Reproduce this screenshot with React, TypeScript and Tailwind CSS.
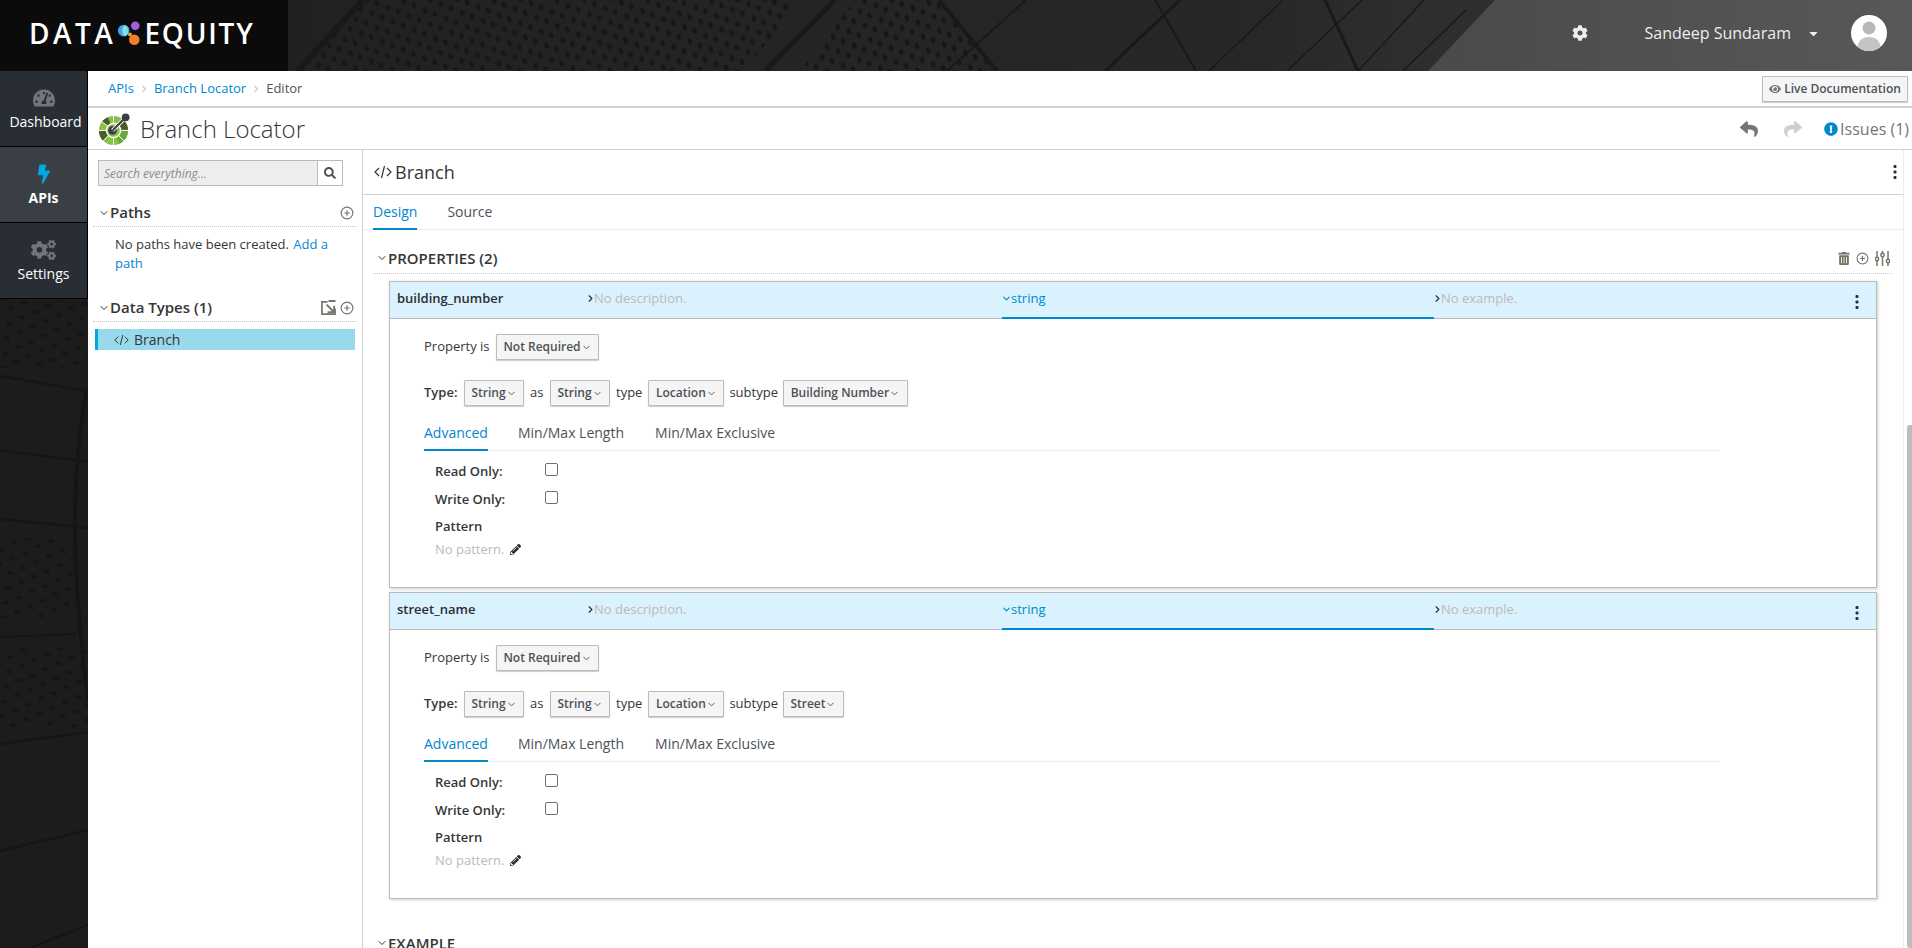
import React from "react";
import { ChevronDown, ChevronRight, CirclePlus } from "lucide-react";
import {
  FaCog, FaCogs, FaTachometerAlt, FaBolt, FaCaretDown, FaEye, FaReply, FaShare,
  FaExclamationCircle, FaTrashAlt, FaPencilAlt, FaSearch,
} from "react-icons/fa";

const CodeIcon = ({ className }: { className?: string }) => (
  <svg viewBox="0 0 18 14" className={className} fill="none" stroke="currentColor" strokeWidth="1.2">
    <path d="M5 3 1 7l4 4M13 3l4 4-4 4M10.500 1 7.500 13" />
  </svg>
);

const Kebab = () => (
  <svg viewBox="0 0 4 14" className="h-[14px] w-1" fill="#292e34">
    <rect x="0.500" y="0" width="3" height="3" rx="1" />
    <rect x="0.500" y="5.500" width="3" height="3" rx="1" />
    <rect x="0.500" y="11" width="3" height="3" rx="1" />
  </svg>
);

const ImportIcon = () => (
  <svg viewBox="0 0 16 16" className="h-[15px] w-[15px]" fill="none" stroke="#77746a" strokeWidth="1.800">
    <path d="M7 2H1v13h14V9" />
    <path d="M8 1h7.500M6 5l7 7M14 6v7H7" strokeWidth="2" />
  </svg>
);

const SlidersIcon = () => (
  <svg viewBox="0 0 15 15" className="h-[15px] w-[15px]" fill="none" stroke="#77746a" strokeWidth="1.500">
    <path d="M2 0v6M2 10v5M7.500 0v2M7.500 6v9M13 0v8M13 12v3" />
    <circle cx="2" cy="8" r="1.700" />
    <circle cx="7.500" cy="4" r="1.700" />
    <circle cx="13" cy="10" r="1.700" />
  </svg>
);

const OpenApiLogo = () => (
  <svg viewBox="0 0 34 34" className="h-[33px] w-[33px] shrink-0">
    <circle cx="16" cy="19" r="15" fill="#85c341" />
    <path d="M16 19 4 10A15 15 0 0 1 10 5.300ZM16 19 1 19A15 15 0 0 0 5 29.500ZM16 19 31 19A15 15 0 0 0 26 8Z" fill="#4d5a2e" />
    <path d="M16 19 22 32.800A15 15 0 0 0 28 28ZM16 19 31 19A15 15 0 0 1 28 28Z" fill="#69a83c" />
    <g stroke="#fff" strokeWidth="1">
      <path d="M16 19 16 4M16 19 4 10M16 19 1 19M16 19 5 30M16 19 16 34M16 19 27 30M16 19 31 19" />
    </g>
    <circle cx="16" cy="19" r="8" fill="#fff" />
    <circle cx="16" cy="19" r="6.500" fill="#85c341" />
    <circle cx="15" cy="19" r="4.500" fill="#3c3f41" />
    <path d="M15 19 28 6" stroke="#fff" strokeWidth="4" />
    <path d="M15 19 28 6" stroke="#3c3f41" strokeWidth="2.200" />
    <circle cx="28.500" cy="5.500" r="4" fill="#3c3f41" />
  </svg>
);

const HeaderTexture = () => (
  <svg className="absolute inset-0 h-[71px] w-[1912px]" viewBox="0 0 1912 71" aria-hidden="true">
    <defs>
      <linearGradient id="hg" x1="0" x2="1" y1="0" y2="0">
        <stop offset="0" stopColor="#1f1f1f" />
        <stop offset="0.65" stopColor="#272727" />
        <stop offset="0.74" stopColor="#2e2e2e" />
      </linearGradient>
      <pattern id="dots" width="17" height="15" patternUnits="userSpaceOnUse" patternTransform="rotate(-20)">
        <ellipse cx="5" cy="5" rx="2.300" ry="3.200" fill="#171717" />
        <ellipse cx="13" cy="12" rx="2.300" ry="3.200" fill="#171717" />
      </pattern>
      <linearGradient id="gg" x1="0" x2="1" y1="0" y2="0">
        <stop offset="0" stopColor="#4a4a4a" />
        <stop offset="1" stopColor="#585858" />
      </linearGradient>
    </defs>
    <rect width="1912" height="71" fill="url(#hg)" />
    <polygon points="300,71 365,0 800,0 745,71" fill="url(#dots)" />
    <polygon points="800,71 855,0 940,0 995,71" fill="url(#dots)" />
    <polygon points="1495,0 1912,0 1912,71 1428,71" fill="url(#gg)" />
    <g stroke="#191919" fill="none">
      <path d="M363 0 297 71" strokeWidth="6" />
      <path d="M835 0 765 71" strokeWidth="5" />
      <path d="M939 0 997 71" strokeWidth="4" />
      <path d="M1026 0 947 71" strokeWidth="2" />
      <path d="M1180 0 1105 71" strokeWidth="3" />
      <path d="M1155 0 1196 71" strokeWidth="2" />
      <path d="M1283 0 1209 71" strokeWidth="1.500" />
      <path d="M1325 0 1358 71" strokeWidth="3" />
      <path d="M1362 0 1287 71" strokeWidth="1.500" />
      <path d="M1424 0 1358 71" strokeWidth="1.500" />
      <path d="M1466 10 1403 71" strokeWidth="1.500" />
    </g>
  </svg>
);

const SidebarTexture = () => (
  <svg className="absolute left-0 top-0 h-[877px] w-[88px]" viewBox="0 71 88 877" aria-hidden="true">
    <defs>
      <pattern id="sdots" width="24" height="15" patternUnits="userSpaceOnUse" patternTransform="rotate(8)">
        <ellipse cx="6" cy="4" rx="3.500" ry="2" fill="#151515" />
        <ellipse cx="18" cy="11" rx="3.500" ry="2" fill="#151515" />
      </pattern>
    </defs>
    <rect x="0" y="71" width="88" height="877" fill="#1c1c1c" />
    <rect x="0" y="300" width="88" height="68" fill="url(#sdots)" />
    <rect x="0" y="538" width="74" height="80" fill="url(#sdots)" />
    <rect x="0" y="647" width="88" height="80" fill="url(#sdots)" />
    <g stroke="#151515" fill="none" strokeWidth="2.500">
      <path d="M0 376 88 391" />
      <path d="M0 450 88 462" />
      <path d="M0 519 88 528" />
      <path d="M0 637 75 634" strokeWidth="1.500" />
      <path d="M0 744 88 732" />
      <path d="M0 851 88 830" />
      <path d="M30 948 88 925" />
      <path d="M86 392C72 470 70 560 88 700" strokeWidth="3.500" />
    </g>
  </svg>
);

const Logo = () => (
  <div className="relative flex h-[71px] w-[288px] shrink-0 items-center bg-[#0b0b0b] pb-[5px] pl-[29px]">
    <span className="text-[28px] font-semibold leading-none tracking-[3.500px] text-white">DATA</span>
    <svg viewBox="0 0 26 26" className="ml-[1px] mr-[2px] h-[25px] w-[25px] shrink-0">
      <circle cx="7" cy="10" r="6" fill="#4aa3e8" />
      <ellipse cx="8.500" cy="10" rx="3" ry="5.500" fill="#7fe3e0" />
      <circle cx="19" cy="5" r="4.500" fill="#a45fd6" />
      <circle cx="13.500" cy="14" r="2" fill="#e8a23c" />
      <circle cx="18" cy="19.500" r="5.500" fill="#f57c26" />
    </svg>
    <span className="text-[28px] font-semibold leading-none tracking-[1.800px] text-white">EQUITY</span>
  </div>
);

const Header = () => (
  <header className="relative flex h-[71px] shrink-0 items-center">
    <HeaderTexture />
    <Logo />
    <div className="relative ml-auto flex h-full items-center pb-[5px] text-white">
      <FaCog className="mr-[57px] h-[16px] w-[16px] text-[#eeeeee]" />
      <span className="text-[16px] text-[#eeeeee]">Sandeep Sundaram</span>
      <FaCaretDown className="ml-[16px] mr-[31px] h-[13px] w-[13px] text-[#eeeeee]" />
      <svg viewBox="0 0 36 36" className="mr-[25px] h-[36px] w-[36px]">
        <clipPath id="av"><circle cx="18" cy="18" r="18" /></clipPath>
        <g clipPath="url(#av)">
          <rect width="36" height="36" fill="#fff" />
          <circle cx="18" cy="13" r="6.500" fill="#b8b8b8" />
          <path d="M6 36c0-10 5-14 12-14s12 4 12 14Z" fill="#c4c4c4" />
        </g>
      </svg>
    </div>
  </header>
);

const NavItem = ({ icon, label, active, bold, labelClass }: { icon: React.ReactNode; label: string; active?: boolean; bold?: boolean; labelClass?: string }) => (
  <div
    className={`flex h-[76px] w-[88px] flex-col items-center justify-center border-b border-r border-black ${active ? "bg-[#393f44]" : "bg-[#292e34]"}`}
  >
    <div className="mt-[1px] flex h-[24px] items-center">{icon}</div>
    <span className={`mt-[2px] text-[14px] leading-[20px] text-white ${bold ? "font-bold" : ""} ${labelClass ?? ""}`}>{label}</span>
  </div>
);

const Sidebar = () => (
  <aside className="relative w-[88px] shrink-0">
    <SidebarTexture />
    <div className="relative flex flex-col">
      <NavItem icon={<FaTachometerAlt className="h-[20px] w-[22px] text-[#72767b]" />} label="Dashboard" labelClass="ml-[4px]" />
      <NavItem icon={<FaBolt className="h-[20px] w-[12px] text-[#00a8e1]" />} label="APIs" active bold />
      <NavItem icon={<FaCogs className="h-[22px] w-[25px] text-[#72767b]" />} label="Settings" />
    </div>
  </aside>
);

const Crumb = () => (
  <div className="flex h-[37px] shrink-0 items-center border-b-2 border-[#d1d1d1] pl-[20px] pr-[4px] text-[13px]">
    <span className="text-[#0088ce]">APIs</span>
    <ChevronRight className="mx-[4px] h-[12px] w-[12px] text-[#8b8d8f]" strokeWidth={1.500} />
    <span className="text-[#0088ce]">Branch Locator</span>
    <ChevronRight className="mx-[4px] h-[12px] w-[12px] text-[#8b8d8f]" strokeWidth={1.500} />
    <span className="text-[#4d5258]">Editor</span>
    <button className="ml-auto flex h-[26px] w-[146px] items-center justify-center rounded-[1px] border border-[#bbbbbb] bg-[#f5f5f5] text-[12px] font-semibold text-[#4d5258] shadow-[0_1px_1px_rgba(0,0,0,0.2)]">
      <FaEye className="mr-[3px] h-[12px] w-[12px] text-[#72767b]" />
      Live Documentation
    </button>
  </div>
);

const TitleBar = () => (
  <div className="flex h-[42px] shrink-0 items-center border-b border-[#d1d1d1] pl-[10px] pr-[3px]">
    <OpenApiLogo />
    <span className="ml-[9px] text-[24px] font-light leading-none text-[#363636]">Branch Locator</span>
    <div className="ml-auto flex items-center text-[#72767b]">
      <FaReply className="h-[18px] w-[20px] text-[#72767b]" />
      <FaShare className="ml-[24px] h-[18px] w-[20px] text-[#cfcfcf]" />
      <FaExclamationCircle className="ml-[21px] h-[14px] w-[14px] text-[#0088ce]" />
      <span className="ml-[2px] text-[16px] text-[#72767b]">Issues (1)</span>
    </div>
  </div>
);

const SectionHead = ({ title, icons, className }: { title: string; icons: React.ReactNode; className?: string }) => (
  <div className={`flex h-[30px] items-center border-b border-dotted border-[#c8c8c8] ${className ?? ""}`}>
    <ChevronDown className="ml-[5px] h-[12px] w-[12px] shrink-0 text-[#363636]" strokeWidth={2} />
    <span className="text-[15px] font-semibold text-[#363636]">{title}</span>
    <div className="ml-auto mr-[3px] flex items-center gap-[4px]">{icons}</div>
  </div>
);

const PlusIcon = () => <CirclePlus className="h-[14px] w-[14px] text-[#77746a]" strokeWidth={2} />;

const LeftPanel = () => (
  <div className="w-[275px] shrink-0 border-r border-[#d1d1d1] pl-[5px] pr-[5px]">
    <div className="ml-[5px] mt-[10px] flex h-[26px] w-[245px]">
      <div className="flex flex-1 items-center border border-[#bbbbbb] bg-[#ededed] pl-[5px] pt-[1px] text-[12px] italic text-[#8b8d8f]">
        Search everything...
      </div>
      <div className="flex w-[25px] items-center justify-center border border-l-0 border-[#bbbbbb] bg-white">
        <FaSearch className="h-[12px] w-[12px] text-[#4d5258]" />
      </div>
    </div>
    <div className="mt-[11px]">
      <SectionHead title="Paths" className="pt-[2px]" icons={<PlusIcon />} />
    </div>
    <p className="mb-0 ml-[22px] mr-[20px] mt-[8px] text-[13px] leading-[19px] text-[#363636]">
      No paths have been created. <span className="ml-[1px] text-[#0088ce]">Add a path</span>
    </p>
    <div className="mt-[19px]">
      <SectionHead title="Data Types (1)" className="pt-[2px]" icons={<><ImportIcon /><PlusIcon /></>} />
    </div>
    <div className="mx-[2px] mt-[7px] flex h-[21px] items-center border-l-[3px] border-[#00a8e1] bg-[#99d9ec] pl-[16px] text-[14px] text-[#363636]">
      <CodeIcon className="h-[12px] w-[15px]" />
      <span className="ml-[5px]">Branch</span>
    </div>
  </div>
);

const Dropdown = ({ label, w }: { label: string; w: string }) => (
  <div className={`flex h-[26px] ${w} shrink-0 items-center justify-center rounded-[1px] border border-[#bbbbbb] bg-[#f5f5f5] text-[12px] font-semibold text-[#4d5258] shadow-[0_1px_1px_rgba(0,0,0,0.2)]`}>
    {label}
    <ChevronDown className="h-[11px] w-[11px] shrink-0" strokeWidth={2} />
  </div>
);

const Check = ({ label }: { label: string }) => (
  <div className="flex h-[28px] items-center">
    <span className="w-[110px] pt-[2px] text-[13px] font-semibold text-[#363636]">{label}</span>
    <span className="mb-[4px] h-[13px] w-[13px] rounded-[2px] border border-[#6f6f6f] bg-white" />
  </div>
);

const PropertyCard = ({ name, subtype, subW }: { name: string; subtype: string; subW: string }) => (
  <div className="h-[307px] border border-[#bbbbbb] bg-white shadow-[1px_1px_3px_rgba(0,0,0,0.2)]">
    <div className="flex h-[37px] items-stretch border-b border-[#bbbbbb] bg-[#d9f2fd] text-[13px]">
      <div className="flex w-[196px] items-center pb-[3px] pl-[7px] font-semibold text-[#292e34]">{name}</div>
      <div className="flex w-[416px] items-center pb-[3px] text-[#bbbbbb]">
        <ChevronRight className="-ml-[1px] -mr-[2px] h-[11px] w-[11px] shrink-0 text-[#292e34]" strokeWidth={2.500} />
        <span>No description.</span>
      </div>
      <div className="-mb-[1px] flex w-[432px] items-center border-b-2 border-[#0088ce] pb-[2px] text-[#0088ce]">
        <ChevronDown className="-ml-[1px] -mr-[1px] h-[11px] w-[11px] shrink-0" strokeWidth={2.500} />
        <span>string</span>
      </div>
      <div className="flex flex-1 items-center pb-[3px] text-[#bbbbbb]">
        <ChevronRight className="-ml-[2px] -mr-[2px] h-[11px] w-[11px] shrink-0 text-[#292e34]" strokeWidth={2.500} />
        <span>No example.</span>
      </div>
      <div className="mr-[17px] flex items-center pt-[3px]"><Kebab /></div>
    </div>
    <div className="pl-[34px]">
      <div className="mt-[15px] flex h-[26px] items-center text-[13px] text-[#363636]">
        <span className="w-[72px]">Property is</span>
        <Dropdown label="Not Required" w="w-[103px]" />
      </div>
      <div className="mt-[20px] flex h-[26px] items-center text-[13px] text-[#363636]">
        <span className="w-[40px] font-semibold">Type:</span>
        <Dropdown label="String" w="w-[60px]" />
        <span className="w-[26px] pl-[6px]">as</span>
        <Dropdown label="String" w="w-[60px]" />
        <span className="px-[6px]">type</span>
        <Dropdown label="Location" w="w-[76px]" />
        <span className="pl-[5px] pr-[5px]">subtype</span>
        <Dropdown label={subtype} w={subW} />
      </div>
      <div className="mr-[156px] mt-[14px] flex h-[31px] items-end gap-[30px] border-b border-[#ededed] text-[14px] text-[#4d5258]">
        <span className="-mb-[1px] border-b-2 border-[#0088ce] pb-[6px] text-[#0088ce]">Advanced</span>
        <span className="pb-[7px]">Min/Max Length</span>
        <span className="ml-[1px] pb-[7px]">Min/Max Exclusive</span>
      </div>
      <div className="ml-[11px] mt-[6px]">
        <Check label="Read Only:" />
        <Check label="Write Only:" />
        <div className="mt-[3px] text-[13px] font-semibold leading-[20px] text-[#363636]">Pattern</div>
        <div className="mt-[3px] flex items-center text-[13px] leading-[20px] text-[#bbbbbb]">
          No pattern.
          <FaPencilAlt className="ml-[6px] h-[11px] w-[11px] text-[#292e34]" />
        </div>
      </div>
    </div>
  </div>
);

const RightPanel = () => (
  <div className="flex min-w-0 flex-1 flex-col">
    <div className="flex h-[45px] shrink-0 items-center border-b border-[#d1d1d1] pl-[11px] pr-[6px]">
      <CodeIcon className="h-[14px] w-[18px] text-[#363636]" />
      <span className="ml-[3px] text-[18px] text-[#363636]">Branch</span>
      <div className="ml-auto flex"><Kebab /></div>
    </div>
    <div className="flex h-[35px] shrink-0 items-end gap-[30px] border-b border-[#ededed] pl-[10px] text-[14px] text-[#4d5258]">
      <span className="-mb-[1px] border-b-[2px] border-[#0088ce] pb-[6px] text-[#0088ce]">Design</span>
      <span className="pb-[7px]">Source</span>
    </div>
    <div className="flex-1 overflow-hidden pl-[10px] pr-[11px] pt-[15px]">
      <div className="flex h-[29px] items-center border-b border-dotted border-[#c8c8c8] pb-[2px]">
        <ChevronDown className="ml-[3px] h-[12px] w-[12px] shrink-0 text-[#363636]" strokeWidth={2} />
        <span className="text-[15px] font-semibold text-[#363636]">PROPERTIES (2)</span>
        <div className="ml-auto mr-[2px] flex items-center gap-[6px] text-[#77746a]">
          <FaTrashAlt className="h-[13px] w-[12px]" />
          <CirclePlus className="h-[13px] w-[13px]" strokeWidth={2} />
          <SlidersIcon />
        </div>
      </div>
      <div className="ml-[16px] mr-[15px] mt-[7px] flex flex-col gap-[4px]">
        <PropertyCard name="building_number" subtype="Building Number" subW="w-[125px]" />
        <PropertyCard name="street_name" subtype="Street" subW="w-[61px]" />
      </div>
      <div className="mt-[33px] flex items-center">
        <ChevronDown className="ml-[3px] h-[12px] w-[12px] shrink-0 text-[#363636]" strokeWidth={2} />
        <span className="text-[15px] font-semibold text-[#363636]">EXAMPLE</span>
      </div>
    </div>
  </div>
);

export default function App() {
  return (
    <div className="flex h-[948px] w-[1912px] flex-col overflow-hidden font-['Open_Sans',sans-serif]">
      <Header />
      <div className="flex min-h-0 flex-1">
        <Sidebar />
        <main className="flex min-w-0 flex-1 flex-col bg-white">
          <Crumb />
          <TitleBar />
          <div className="flex min-h-0 flex-1">
            <LeftPanel />
            <RightPanel />
            <div className="w-[9px] shrink-0 border-l border-[#ededed] pl-[3px] pt-[275px]">
              <div className="h-full w-[5px] rounded-l-[3px] bg-[#bdbdbd]" />
            </div>
          </div>
        </main>
      </div>
    </div>
  );
}
